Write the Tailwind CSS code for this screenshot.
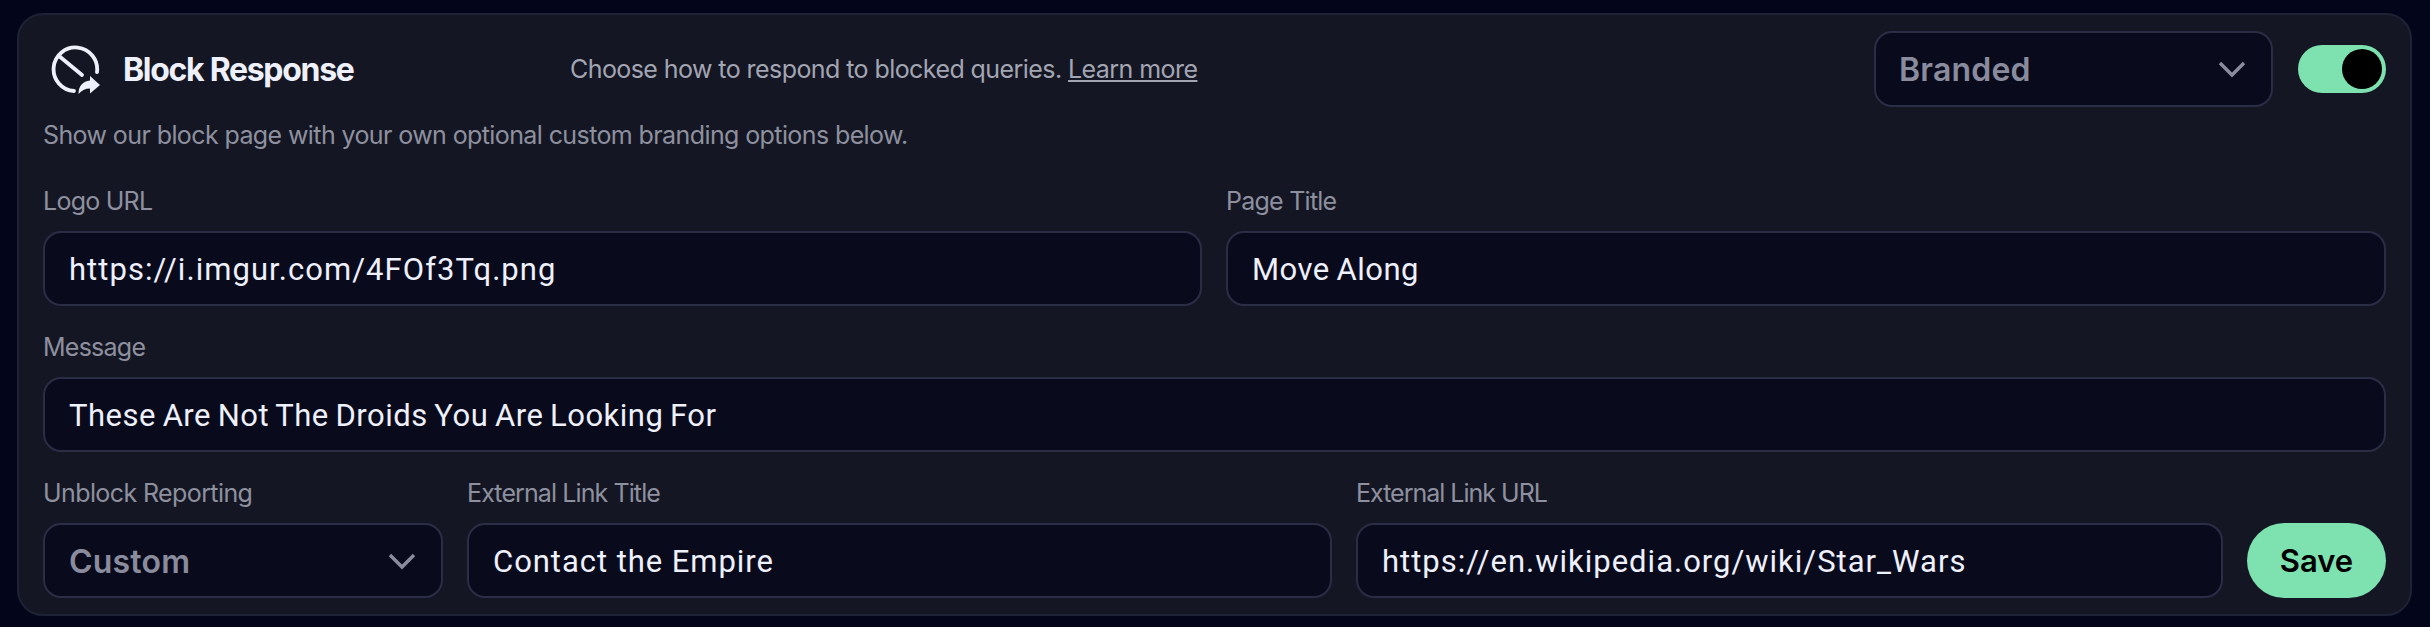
<!DOCTYPE html>
<html lang="en">
<head>
    <meta charset="UTF-8">
    <title>Block Response</title>
    <script src="https://cdn.jsdelivr.net/npm/@tailwindcss/browser@4"></script>
</head>
<body class="bg-[#03061a] font-['Inter',sans-serif]">
    <div class="w-[2430px] h-[627px] pt-[13px] pl-[17px]">
        <div class="w-[2395px] h-[603px] px-6 pt-4 border-2 border-[#1f2234] rounded-[26px] bg-[#141723]">
            <!-- Header -->
            <div class="flex items-center h-[76px]">
                <div class="flex items-center w-[527px] pl-[7px] gap-[23px]">
                    <svg class="w-[50px] h-[52px] shrink-0" viewBox="50 43 50 52" fill="none">
                        <path d="M74 91 A21.8 21.8 0 1 1 97 72" stroke="#eef0fb" stroke-width="3.8" stroke-linecap="round"/>
                        <path d="M59 56 L82 75" stroke="#eef0fb" stroke-width="3.8" stroke-linecap="round"/>
                        <path d="M78.5 94 C78.5 86 83 81 90 80.5 V76 L100 85 L90 93.5 V88.5 C85 88.5 81.5 90.5 78.5 94 Z" fill="#eef0fb"/>
                    </svg>
                    <h2 class="pt-[2px] text-[32px] font-bold tracking-[-1.3px] text-[#eef0fb]">Block Response</h2>
                </div>
                <p class="pt-[2px] text-[25px] tracking-[-0.57px] text-[#a3a5b3]">Choose how to respond to blocked queries. <a href="#" class="underline">Learn more</a></p>
                <div class="relative ml-auto w-[399px]">
                    <select class="appearance-none w-full h-[76px] pl-[23px] pt-[2px] rounded-[18px] border-2 border-[#2a2d45] bg-[#090b1d] text-[32px] font-semibold tracking-[0.2px] text-[#8a8b9c]">
                        <option>Branded</option>
                    </select>
                    <svg class="absolute right-[27px] top-[29px] w-[28px] h-[18px]" viewBox="0 0 28 18" fill="none"><path d="M2 3 L14 15 L26 3" stroke="#8a8b9c" stroke-width="3.4"/></svg>
                </div>
                <div class="ml-[25px] flex items-center justify-end w-[88px] h-[48px] pr-1 rounded-full bg-[#7ee2b0]">
                    <span class="block w-10 h-10 rounded-full bg-black"></span>
                </div>
            </div>
            <p class="mt-[14px] text-[25px] leading-[28px] tracking-[-0.6px] text-[#8e909f]">Show our block page with your own optional custom branding options below.</p>

            <!-- Logo and title -->
            <div class="flex gap-6 mt-[38px]">
                <label class="w-[1159px] block">
                    <span class="block text-[25px] leading-[28px] tracking-[-0.75px] text-[#8e909f]">Logo URL</span>
                    <input class="mt-4 w-full h-[75px] px-[24px] pt-[2px] rounded-[18px] border-2 border-[#2a2d45] bg-[#090b1d] font-['Roboto',sans-serif] text-[31px] tracking-[1.05px] text-[#eef0fb]" value="https://i.imgur.com/4FOf3Tq.png">
                </label>
                <label class="flex-1 block">
                    <span class="block text-[25px] leading-[28px] tracking-[-0.75px] text-[#8e909f]">Page Title</span>
                    <input class="mt-4 w-full h-[75px] px-[24px] pt-[2px] rounded-[18px] border-2 border-[#2a2d45] bg-[#090b1d] font-['Roboto',sans-serif] text-[31px] tracking-[0.5px] [word-spacing:-1.5px] text-[#eef0fb]" value="Move Along">
                </label>
            </div>

            <label class="block mt-[27px]">
                <span class="block text-[25px] leading-[28px] tracking-[-0.75px] text-[#8e909f]">Message</span>
                <input class="mt-4 w-full h-[75px] px-[24px] pt-[2px] rounded-[18px] border-2 border-[#2a2d45] bg-[#090b1d] font-['Roboto',sans-serif] text-[31px] tracking-[0.5px] [word-spacing:-1.5px] text-[#eef0fb]" value="These Are Not The Droids You Are Looking For">
            </label>

            <!-- Reporting -->
            <div class="flex gap-6 mt-[27px] items-end">
                <label class="w-[400px] block">
                    <span class="block text-[25px] leading-[28px] tracking-[-0.6px] text-[#8e909f]">Unblock Reporting</span>
                    <span class="relative block mt-4">
                        <select class="appearance-none w-full h-[75px] pl-[24px] pt-[2px] rounded-[18px] border-2 border-[#2a2d45] bg-[#090b1d] text-[32px] font-semibold tracking-[0.2px] text-[#8a8b9c]">
                            <option>Custom</option>
                        </select>
                        <svg class="absolute right-[27px] top-[29px] w-[28px] h-[18px]" viewBox="0 0 28 18" fill="none"><path d="M2 3 L14 15 L26 3" stroke="#8a8b9c" stroke-width="3.4"/></svg>
                    </span>
                </label>
                <label class="w-[865px] block">
                    <span class="block text-[25px] leading-[28px] tracking-[-0.9px] text-[#8e909f]">External Link Title</span>
                    <input class="mt-4 w-full h-[75px] px-[24px] pt-[2px] rounded-[18px] border-2 border-[#2a2d45] bg-[#090b1d] font-['Roboto',sans-serif] text-[31px] tracking-[0.95px] text-[#eef0fb]" value="Contact the Empire">
                </label>
                <label class="flex-1 block">
                    <span class="block text-[25px] leading-[28px] tracking-[-1px] text-[#8e909f]">External Link URL</span>
                    <input class="mt-4 w-full h-[75px] px-[24px] pt-[2px] rounded-[18px] border-2 border-[#2a2d45] bg-[#090b1d] font-['Roboto',sans-serif] text-[31px] tracking-[1px] text-[#eef0fb]" value="https://en.wikipedia.org/wiki/Star_Wars">
                </label>
                <button class="w-[139px] h-[75px] rounded-full bg-[#7ee2b0] pt-[2px] text-[31px] font-semibold text-black">Save</button>
            </div>
        </div>
    </div>
</body>
</html>
